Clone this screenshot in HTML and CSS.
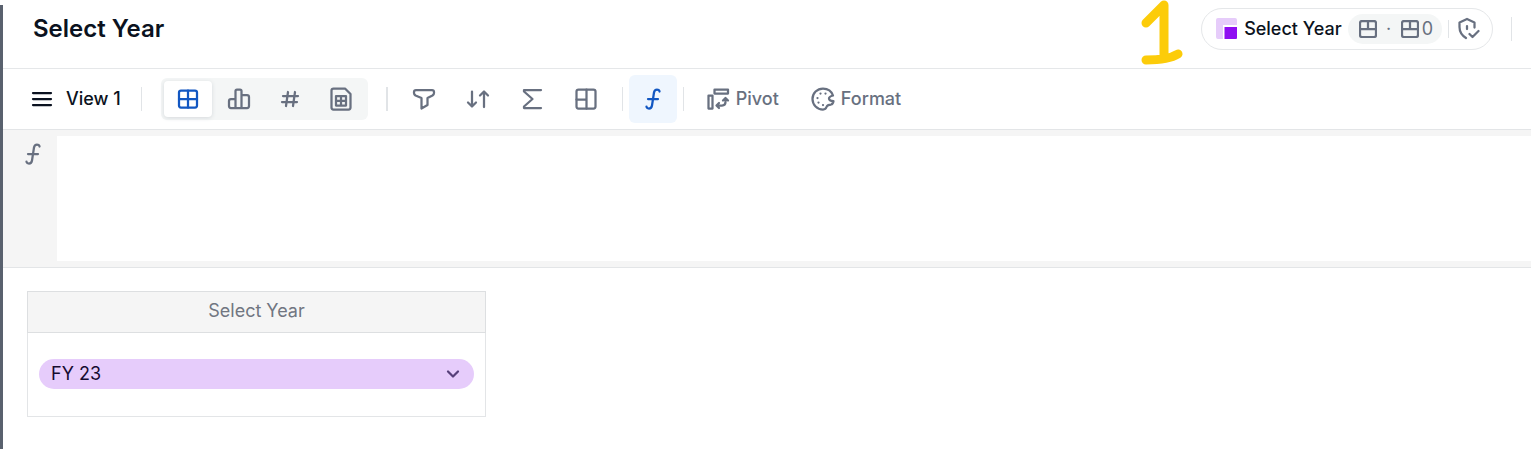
FILE: index.html
```html
<!DOCTYPE html>
<html lang="en">
<head>
<meta charset="utf-8">
<meta name="viewport" content="width=device-width, initial-scale=1">
<title>Select Year</title>
<link rel="stylesheet" href="styles.css">
</head>
<body>
<main class="panel">
  <header class="header">
    <h1 class="title">Select Year</h1>
    <div class="header-end">
      <svg class="marker" viewBox="0 0 44 68" aria-label="1" role="img"><path d="M6 24 24 6M24 6V59M6 61C20 61 30 60 38 55"/></svg>
      <div class="block-pill">
        <button class="block-name" type="button">
          <svg class="logo" viewBox="0 0 22 22"><path fill="#e6ccfa" d="M2 0H19Q21 0 21 2V7H7V21H2Q0 21 0 19V2Q0 0 2 0Z"/><path fill="#8f0df2" d="M8.500 9H21V20Q21 21 20 21H8.500Z"/></svg>
          <span>Select Year</span>
        </button>
        <button class="chip" type="button" aria-label="Dimensions">
          <svg class="icon-sm" viewBox="0 0 18 18"><rect x="1" y="1" width="16" height="16" rx="2"/><path d="M1 9H17M9 1V9"/></svg>
          <span class="dot">·</span>
          <svg class="icon-sm" viewBox="0 0 18 18"><rect x="1" y="1" width="16" height="16" rx="2"/><path d="M1 9H17M9 1V9"/></svg>
          <span class="count">0</span>
        </button>
        <span class="rule rule-short"></span>
        <button class="shield" type="button" aria-label="Access rights">
          <svg class="icon" viewBox="0 0 24 24"><path d="M18.500 10.500V5.500L11 2 3.500 5.500V10C3.500 15 6 18.500 10 21M11 9V12M13.500 17 16.500 20 22.500 14"/></svg>
        </button>
      </div>
      <span class="rule"></span>
    </div>
  </header>

  <nav class="toolbar" aria-label="View tools">
    <button class="view-button" type="button">
      <svg class="icon menu-icon" viewBox="0 0 24 24"><path d="M3 6H21M3 12H21M3 18H21"/></svg>
      <span>View 1</span>
    </button>
    <span class="rule"></span>
    <div class="segments">
      <button class="segment segment-active" type="button" aria-label="Grid">
        <svg class="icon" viewBox="0 0 24 24"><rect x="3" y="3.500" width="18" height="17" rx="2"/><path d="M12 3.500V20.500M3 12H21"/></svg>
      </button>
      <button class="segment" type="button" aria-label="Chart">
        <svg class="icon" viewBox="0 0 24 24"><path d="M8.500 21V4Q8.500 2.500 10 2.500H13Q14.500 2.500 14.500 4V21M8.500 12H4Q2 12 2 14V19Q2 21 4 21H20Q22 21 22 19V10Q22 8 20 8H14.500"/></svg>
      </button>
      <button class="segment" type="button" aria-label="Number">
        <svg class="icon" viewBox="0 0 24 24"><path d="M10 5 8 19M17 5 15 19M5 9H20M4 15H19"/></svg>
      </button>
      <button class="segment" type="button" aria-label="Sheet">
        <svg class="icon" viewBox="0 0 24 24"><path d="M4.500 1.500H16L21.500 7V20.500Q21.500 22.500 19.500 22.500H4.500Q2.500 22.500 2.500 20.500V3.500Q2.500 1.500 4.500 1.500ZM7 9H17V18.500H7ZM12 9V18.500M7 13.750H17"/></svg>
      </button>
    </div>
    <span class="rule rule-group"></span>
    <div class="tools">
      <button class="tool" type="button" aria-label="Filter">
        <svg class="icon" viewBox="0 0 24 24"><path d="M4 3H20Q22 3 22 5V6Q22 7.500 20.500 8.500L15.500 11V18L9.500 21.500V11L3.500 8.500Q2 7.500 2 6V5Q2 3 4 3Z"/></svg>
      </button>
      <button class="tool" type="button" aria-label="Sort">
        <svg class="icon" viewBox="0 0 24 24"><path d="M6 4.500V19M2 15.500 6 19.500 10 15.500M18 20V5M14 8.500 18 4.500 22 8.500"/></svg>
      </button>
      <button class="tool" type="button" aria-label="Totals">
        <svg class="icon" viewBox="0 0 24 24"><path d="M21 3H4V4.500L12.500 12 4 19.500V21H21"/></svg>
      </button>
      <button class="tool" type="button" aria-label="Layout">
        <svg class="icon" viewBox="0 0 24 24"><rect x="2.500" y="2.500" width="19" height="19" rx="2"/><path d="M12.500 2.500V21.500M2.500 12.500H12.500"/></svg>
      </button>
    </div>
    <span class="rule"></span>
    <button class="tool tool-active" type="button" aria-label="Formula">
      <svg class="icon" viewBox="0 0 24 24"><path d="M18.500 4.500V4Q18 2.500 16 2.500 13.500 2.500 13 5.500L11 18.500Q10.500 21.500 8 21.500 6 21.500 5.500 20V19.500M7 12H17"/></svg>
    </button>
    <span class="rule"></span>
    <button class="text-tool text-tool-pivot" type="button">
      <svg class="icon" viewBox="0 0 24 24"><path d="M8.500 2.500H22V6.500H8.500ZM2.500 8.500H6.500V21.500H2.500ZM11 18.500H16Q19.500 18.500 19.500 15V11.500M17 13.500 19.500 11 22 13.500M13 16 10.500 18.500 13 21"/></svg>
      <span>Pivot</span>
    </button>
    <button class="text-tool" type="button">
      <svg class="icon" viewBox="0 0 24 24"><path d="M12 1.500A10.500 10.500 0 1 0 12 22.500C14.500 22.500 15 21.500 15.500 20 16.200 18 17.500 17.500 20 17.500Q22 17 22.500 14C20 14 18 13.500 18 11.500 18 10 20 9 22 8.500 20.500 4 17 1.500 12 1.500Z"/><path d="M9.500 6.500H9.510M14.500 6.500H14.510M6.500 11H6.510M7.500 15.500H7.510M12 18H12.010"/></svg>
      <span>Format</span>
    </button>
  </nav>

  <section class="formula">
    <label class="formula-label" for="formula" aria-label="Formula">
      <svg class="icon" viewBox="0 0 24 24"><path d="M18.500 4.500V4Q18 2.500 16 2.500 13.500 2.500 13 5.500L11 18.500Q10.500 21.500 8 21.500 6 21.500 5.500 20V19.500M7 12H17"/></svg>
    </label>
    <textarea class="formula-input" id="formula" spellcheck="false"></textarea>
  </section>

  <section class="content">
    <table class="grid">
      <thead><tr><th id="year-label" scope="col">Select Year</th></tr></thead>
      <tbody><tr><td>
        <div class="select-wrap">
          <select class="year-select" aria-labelledby="year-label"><option>FY 23</option></select>
          <svg class="chevron" viewBox="0 0 14 14"><path d="M2 4.500 7 9.500 12 4.500"/></svg>
        </div>
      </td></tr></tbody>
    </table>
  </section>
</main>
</body>
</html>
```

FILE: styles.css
```css
* { box-sizing: border-box; }

body {
  margin: 0;
  padding-top: 5px;
  background: #fff;
  color: #0b1220;
  font: 400 18px/24px Inter, "Liberation Sans", sans-serif;
}

button, select, textarea { font: inherit; color: inherit; }

button {
  display: flex;
  align-items: center;
  padding: 0;
  border: 0;
  background: none;
  white-space: nowrap;
}

svg {
  flex: none;
  fill: none;
  stroke: currentColor;
  stroke-width: 2.25;
  stroke-linecap: round;
  stroke-linejoin: round;
}

.icon { width: 24px; height: 24px; }
.icon-sm { width: 18px; height: 18px; }

.rule {
  flex: none;
  width: 1px;
  height: 24px;
  background: #e1e4e7;
}
.rule-short { height: 18px; }
.rule-group { width: 2px; }

.panel {
  min-height: calc(100vh - 5px);
  border-left: 3px solid #59616e;
}

.header {
  display: flex;
  align-items: center;
  justify-content: space-between;
  height: 64px;
  padding: 0 19px 16px 30px;
  border-bottom: 1px solid #e5e7e9;
}

.title {
  margin: 0;
  font-size: 24px;
  line-height: 32px;
  font-weight: 600;
}

.header-end {
  position: relative;
  display: flex;
  align-items: center;
  gap: 18px;
}

.marker {
  position: absolute;
  right: 328px;
  top: -9px;
  width: 44px;
  height: 68px;
  color: #fccc0a;
  stroke-width: 9;
}

.block-pill {
  display: flex;
  align-items: center;
  height: 42px;
  padding: 0 12px 0 14px;
  border: 1px solid #e5e7e9;
  border-radius: 21px;
}

.block-name {
  gap: 6px;
  font-weight: 500;
}
.logo { width: 22px; height: 22px; stroke: none; }

.chip {
  height: 30px;
  margin: 0 6px;
  padding: 0 9px 0 11px;
  border-radius: 15px;
  background: #f4f6f6;
  color: #687080;
}
.dot { width: 24px; text-align: center; }
.count { margin-left: 3px; }

.shield { margin-left: 7px; color: #687080; }

.toolbar {
  display: flex;
  align-items: center;
  height: 61px;
  padding-left: 27px;
  border-bottom: 1px solid #e3e5e7;
  color: #687080;
}

.view-button {
  gap: 12px;
  margin-right: 20px;
  color: #0b1220;
  font-weight: 500;
}

.segments {
  display: flex;
  gap: 3px;
  margin: 0 18px 0 19px;
  padding: 3px;
  border-radius: 6px;
  background: #f4f6f6;
}
.segment {
  justify-content: center;
  width: 48px;
  height: 36px;
  border-radius: 4px;
}
.segment-active {
  background: #fff;
  color: #1257c2;
  box-shadow: 0 1px 4px #d5d9dc;
}

.tools {
  display: flex;
  gap: 6px;
  margin: 0 12px;
}
.tool {
  justify-content: center;
  width: 48px;
  height: 48px;
  border-radius: 6px;
}
.tool-active {
  margin: 0 6px;
  background: #eff6fe;
  color: #1257c2;
}

.text-tool {
  gap: 6px;
  margin-left: 32px;
  font-weight: 500;
}
.text-tool-pivot { margin-left: 22px; }

.formula {
  display: flex;
  height: 138px;
  padding: 6px 0;
  border-bottom: 1px solid #e3e5e7;
  background: #f5f5f5;
}
.formula-label {
  width: 54px;
  padding: 6px 0 0 18px;
  color: #687080;
}
.formula-input {
  flex: 1;
  min-width: 0;
  padding: 6px;
  border: 0;
  outline: 0;
  resize: none;
  background: #fff;
}

.content { padding: 23px 24px; }

.grid {
  width: 459px;
  max-width: 100%;
  border-collapse: collapse;
}
.grid th {
  height: 41px;
  padding: 0 0 2px;
  border: 1px solid #dddfe1;
  background: #f5f5f5;
  color: #717681;
  font-weight: 400;
}
.grid td {
  height: 84px;
  padding: 0 11px 2px;
  border: 1px solid #e3e5e7;
}

.select-wrap { position: relative; display: flex; }
.year-select {
  width: 100%;
  height: 30px;
  padding: 0 36px 0 12px;
  border: 0;
  border-radius: 15px;
  appearance: none;
  background: #e6ccfb;
  color: #160b30;
}
.chevron {
  position: absolute;
  top: 8px;
  right: 14px;
  width: 14px;
  height: 14px;
  color: #57407a;
  pointer-events: none;
}
```
